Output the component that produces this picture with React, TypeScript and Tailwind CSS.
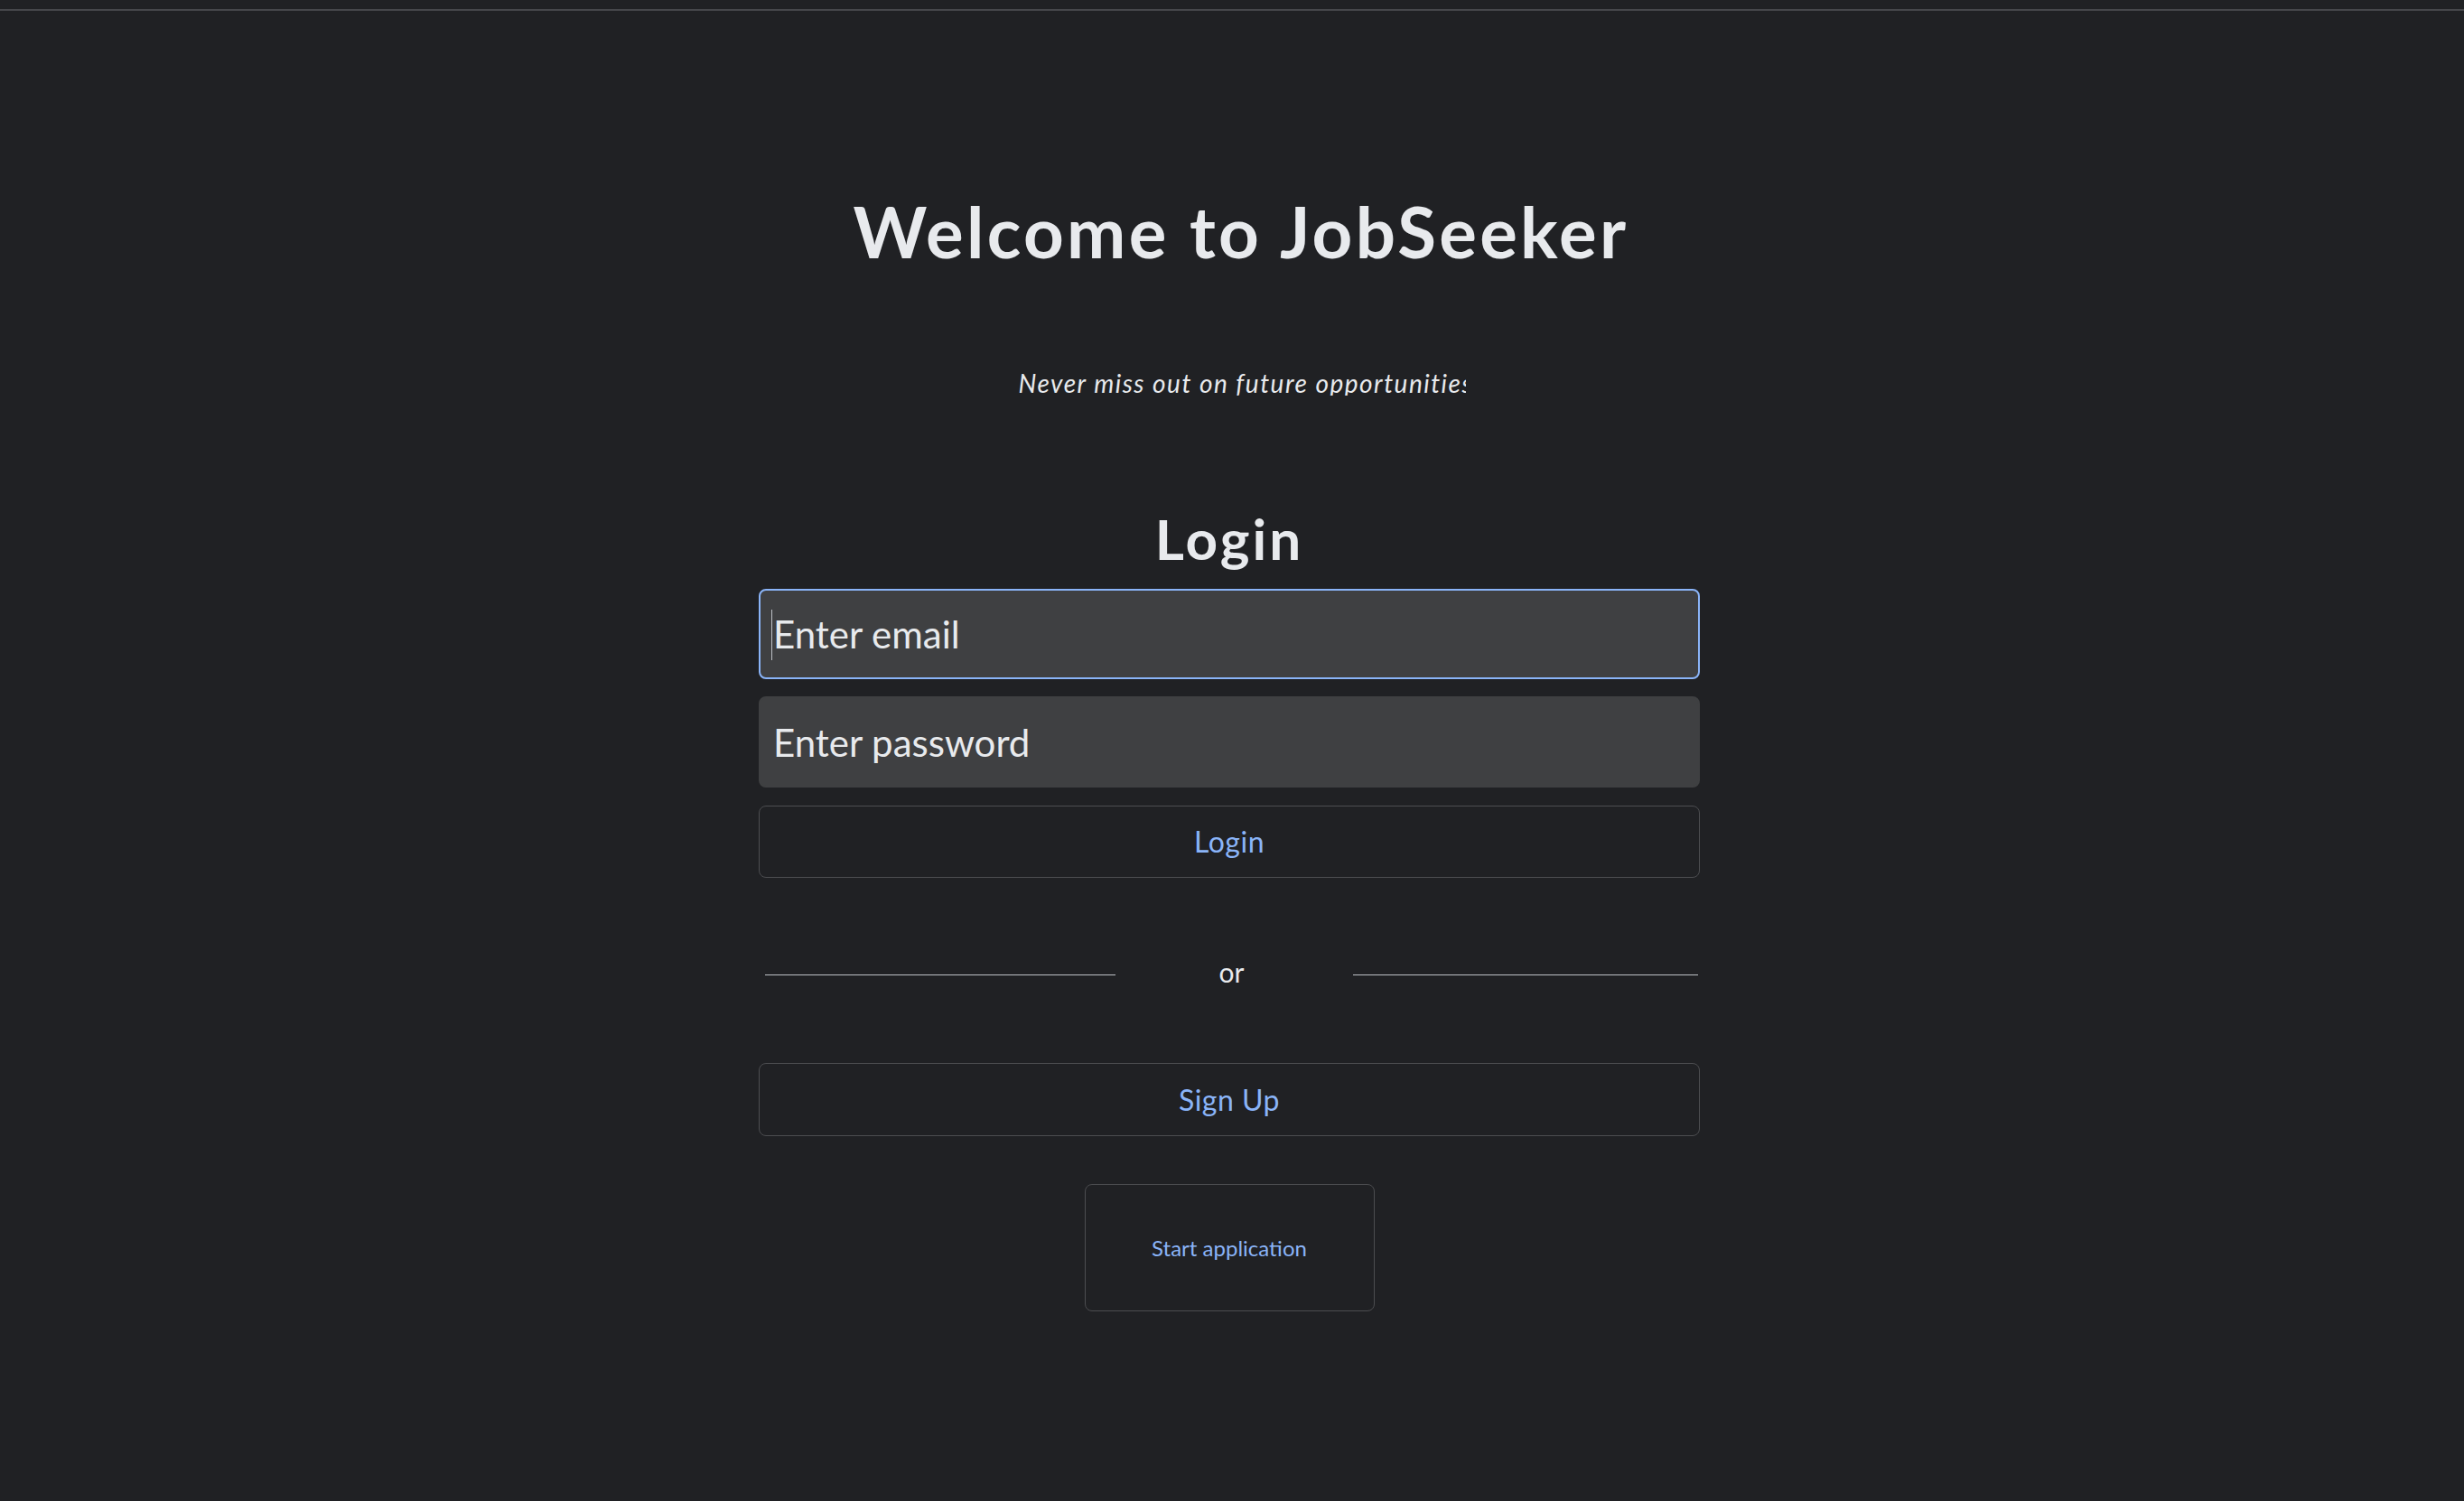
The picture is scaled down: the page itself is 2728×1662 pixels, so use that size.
import React from "react";

export default function App() {
  return (
    <div className="min-h-screen bg-[#202124] font-['Lato',sans-serif] text-[#e8eaed]">
      <div className="pt-[10px]">
        <div className="h-[2px] bg-[#46474b]" />
      </div>

      <div className="flex justify-center pl-[20px]">
        <h1 className="mt-[205px] text-[78px] font-bold leading-none tracking-[3.3px]">Welcome to JobSeeker</h1>
      </div>

      <div className="flex justify-center pl-[22px]">
        <p className="mt-[115px] w-[495px] overflow-hidden whitespace-nowrap text-[28px] italic leading-none tracking-[1.5px]">
          Never miss out on future opportunities
        </p>
      </div>

      <div className="flex justify-center pr-[6px]">
        <div className="flex w-[1042px] flex-col">
          <h2 className="mt-[127px] text-center text-[62px] font-bold leading-none tracking-[3px]">Login</h2>

          <div className="relative mt-[25px]">
            <input
              type="email"
              placeholder="Enter email"
              className="h-[100px] w-full rounded-[8px] border-2 border-[#8ab4f8] bg-[#3f4042] px-[14px] text-[42px] text-[#e8eaed] outline-none placeholder:text-[#e8eaed]"
            />
            <div className="absolute left-[14px] top-[23px] h-[56px] w-[1px] bg-[#bdc1c6]" />
          </div>

          <input
            type="password"
            placeholder="Enter password"
            className="mt-[19px] h-[101px] w-full rounded-[8px] border-2 border-[#3f4042] bg-[#3f4042] px-[14px] text-[42px] text-[#e8eaed] outline-none placeholder:text-[#e8eaed]"
          />

          <button className="mt-[20px] h-[80px] w-full rounded-[8px] border border-[#4c4d50] bg-transparent text-[32px] tracking-[0.5px] text-[#8ab4f8]">
            Login
          </button>

          <div className="mt-[89px] flex items-start">
            <div className="ml-[7px] mt-[18px] h-[1px] w-[388px] bg-[#bdc1c6]" />
            <span className="flex-1 pr-[6px] text-center text-[30px] leading-none">or</span>
            <div className="mr-[2px] mt-[18px] h-[1px] w-[382px] bg-[#bdc1c6]" />
          </div>

          <button className="mt-[86px] h-[81px] w-full rounded-[8px] border border-[#4c4d50] bg-transparent text-[32px] tracking-[0.5px] text-[#8ab4f8]">
            Sign Up
          </button>

          <div className="flex justify-center">
            <button className="mt-[53px] h-[141px] w-[321px] rounded-[8px] border border-[#4c4d50] bg-transparent text-[24px] text-[#8ab4f8]">
              Start application
            </button>
          </div>
        </div>
      </div>
    </div>
  );
}
